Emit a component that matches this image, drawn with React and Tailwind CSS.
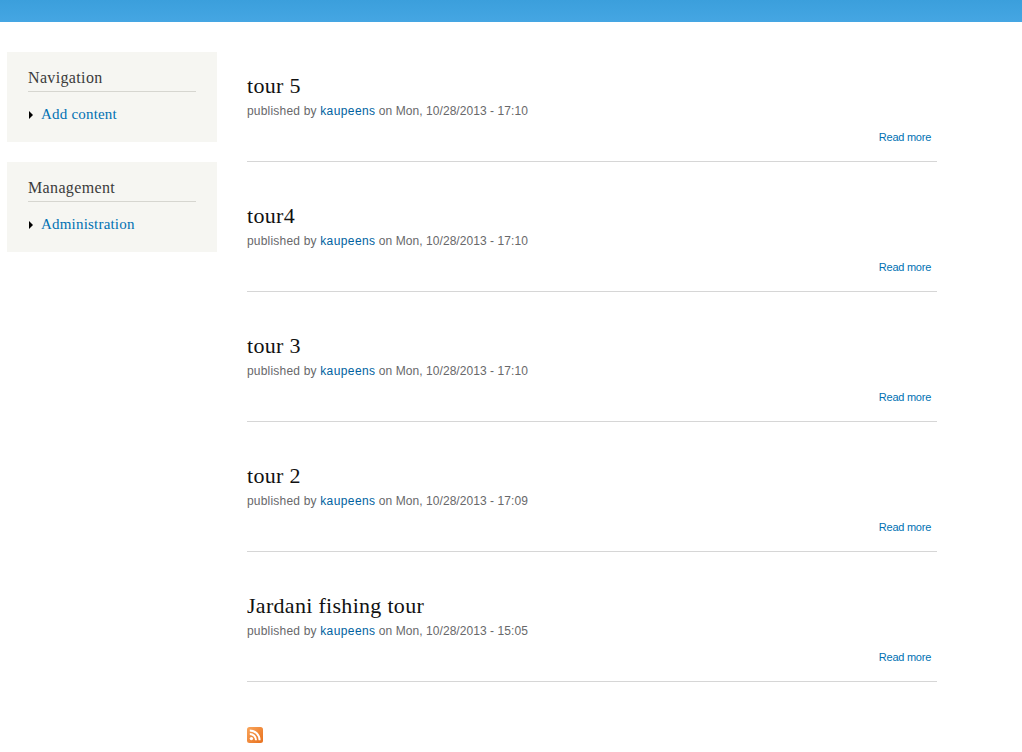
import React from 'react';

const posts = [
  { title: 'tour 5', date: 'Mon, 10/28/2013 - 17:10' },
  { title: 'tour4', date: 'Mon, 10/28/2013 - 17:10' },
  { title: 'tour 3', date: 'Mon, 10/28/2013 - 17:10' },
  { title: 'tour 2', date: 'Mon, 10/28/2013 - 17:09' },
  { title: 'Jardani fishing tour', date: 'Mon, 10/28/2013 - 15:05' },
];

const blocks = [
  { title: 'Navigation', link: 'Add content' },
  { title: 'Management', link: 'Administration' },
];

const SideBlock = ({ title, link }) => (
  <div className="h-[90px] bg-[#f6f6f2] pt-4 px-[21px]">
    <h2 className="h-[24px] border-b border-[#d6d6d0] font-['Liberation_Serif',serif] text-[16px] leading-[20px] tracking-[0.35px] text-[#3b3b3b]">
      {title}
    </h2>
    <div className="mt-[12px] flex items-center">
      <span className="ml-[1px] mt-[2px] h-0 w-0 border-y-[4px] border-l-[4px] border-y-transparent border-l-black" />
      <a className="ml-[8px] font-['Liberation_Serif',serif] text-[15px] leading-[20px] tracking-[0.2px] text-[#0071b3]">{link}</a>
    </div>
  </div>
);

const Post = ({ title, date }) => (
  <article className="mb-5 h-[110px] border-b border-[#d6d6d6] pt-[21px]">
    <h2 className="font-['Liberation_Serif',serif] text-[22px] leading-[26px] tracking-[0.3px] text-[#111111]">{title}</h2>
    <p className="mt-[4px] text-[12px] leading-[16px] tracking-[0.06px] text-[#68686a]">
      <span className="tracking-[0.2px]">published by</span> <a className="tracking-[0.4px] text-[#0062a0]">kaupeens</a> on {date}
    </p>
    <div className="mt-[11px] pr-[6px] text-right text-[11px] leading-[14px] tracking-[-0.25px] text-[#0071b3]">Read more</div>
  </article>
);

const RssIcon = () => (
  <svg width="16" height="16" viewBox="0 0 16 16">
    <defs>
      <linearGradient id="rss" x1="0" y1="0" x2="1" y2="1">
        <stop offset="0" stopColor="#f9a55b" />
        <stop offset="1" stopColor="#e8701d" />
      </linearGradient>
    </defs>
    <rect width="16" height="16" rx="2.5" fill="url(#rss)" />
    <circle cx="4.4" cy="11.6" r="1.7" fill="#fff" />
    <path d="M2.8 7a6.2 6.2 0 0 1 6.2 6.2M2.8 3.4a9.8 9.8 0 0 1 9.8 9.8" fill="none" stroke="#fff" strokeWidth="2" />
  </svg>
);

export default function App() {
  return (
    <div className="h-[752px] overflow-hidden bg-white font-['Liberation_Sans',sans-serif]">
      <header className="h-[22px] bg-gradient-to-b from-[#3b9fdc] to-[#45a6e3]" />
      <div className="flex pt-[30px]">
        <aside className="ml-[7px] flex w-[210px] flex-col gap-5">
          {blocks.map((b) => (
            <SideBlock key={b.title} {...b} />
          ))}
        </aside>
        <main className="ml-[30px] w-[690px]">
          {posts.map((p) => (
            <Post key={p.title} {...p} />
          ))}
          <div className="mt-[45px]">
            <RssIcon />
          </div>
        </main>
      </div>
    </div>
  );
}
